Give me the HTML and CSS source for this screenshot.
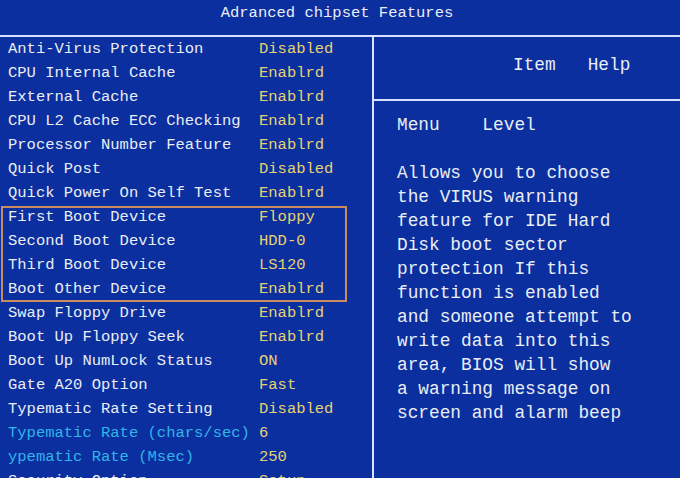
FILE: index.html
```html
<!DOCTYPE html>
<html lang="en">
<head>
<meta charset="UTF-8">
<meta name="viewport" content="width=device-width, initial-scale=1.0">
<title>Advanced chipset Features</title>
<link rel="stylesheet" href="styles.css">
</head>
<body>

<div class="title-bar">Adranced chipset Features</div>

<div class="screen">
    <div class="options">
        <div class="row"><span>Anti-Virus Protection</span><span class="value">Disabled</span></div>
        <div class="row"><span>CPU Internal Cache</span><span class="value">Enablrd</span></div>
        <div class="row"><span>External Cache</span><span class="value">Enablrd</span></div>
        <div class="row"><span>CPU L2 Cache ECC Checking</span><span class="value">Enablrd</span></div>
        <div class="row"><span>Processor Number Feature</span><span class="value">Enablrd</span></div>
        <div class="row"><span>Quick Post</span><span class="value">Disabled</span></div>
        <div class="row"><span>Quick Power On Self Test</span><span class="value">Enablrd</span></div>
        <div class="boot-group">
            <div class="row"><span>First Boot Device</span><span class="value">Floppy</span></div>
            <div class="row"><span>Second Boot Device</span><span class="value">HDD-0</span></div>
            <div class="row"><span>Third Boot Device</span><span class="value">LS120</span></div>
            <div class="row"><span>Boot Other Device</span><span class="value">Enablrd</span></div>
        </div>
        <div class="row"><span>Swap Floppy Drive</span><span class="value">Enablrd</span></div>
        <div class="row"><span>Boot Up Floppy Seek</span><span class="value">Enablrd</span></div>
        <div class="row"><span>Boot Up NumLock Status</span><span class="value">ON</span></div>
        <div class="row"><span>Gate A20 Option</span><span class="value">Fast</span></div>
        <div class="row"><span>Typematic Rate Setting</span><span class="value">Disabled</span></div>
        <div class="row sub"><span>Typematic Rate (chars/sec)</span><span class="value">6</span></div>
        <div class="row sub"><span>ypematic Rate (Msec)</span><span class="value">250</span></div>
        <div class="row"><span>Security Option</span><span class="value">Setup</span></div>
    </div>

    <div class="help">
        <div class="help-head">Item   Help</div>
        <div class="help-body">
            <div class="level">Menu    Level</div>
            <p>Allows you to choose<br>
            the VIRUS warning<br>
            feature for IDE Hard<br>
            Disk boot sector<br>
            protection If this<br>
            function is enabled<br>
            and someone attempt to<br>
            write data into this<br>
            area, BIOS will show<br>
            a warning message on<br>
            screen and alarm beep</p>
        </div>
    </div>
</div>

</body>
</html>
```

FILE: styles.css
```css
body {
    margin: 0;
    height: 478px;
    overflow: hidden;
    background-color: #0b2f9e;
    color: #e9edf5;
    font-family: "Liberation Mono", "DejaVu Sans Mono", monospace;
}

.title-bar {
    height: 37px;
    box-sizing: border-box;
    padding: 1px 6px 0 0;
    font-size: 15.5px;
    line-height: 24px;
    text-align: center;
    border-bottom: 2px solid #d6e2ff;
}

.title-bar,
.help-head,
.level {
    white-space: pre;
}

.screen {
    display: grid;
    grid-template-columns: 374px 1fr;
    height: calc(478px - 37px);
}

.options {
    border-right: 2px solid #d6e2ff;
    font-size: 15.5px;
    line-height: 24px;
}

.row {
    display: grid;
    grid-template-columns: 251px 1fr;
    padding-left: 8px;
    white-space: nowrap;
}

.value {
    color: #e6d274;
}

.sub span:first-child {
    color: #31b5e8;
}

/* the highlighted boot order rows */
.boot-group {
    position: relative;
}

.boot-group::after {
    content: "";
    position: absolute;
    top: 1px;
    bottom: -1px;
    left: 1px;
    width: 346px;
    box-sizing: border-box;
    border: 2px solid #c98b60;
}

.help {
    font-size: 17.8px;
    line-height: 24px;
}

.help-head {
    height: 64px;
    box-sizing: border-box;
    padding: 16px 0 0 139px;
    border-bottom: 2px solid #d6e2ff;
}

.help-body {
    padding: 12px 0 0 23px;
}

.help-body p {
    margin: 24px 0 0;
}
```
